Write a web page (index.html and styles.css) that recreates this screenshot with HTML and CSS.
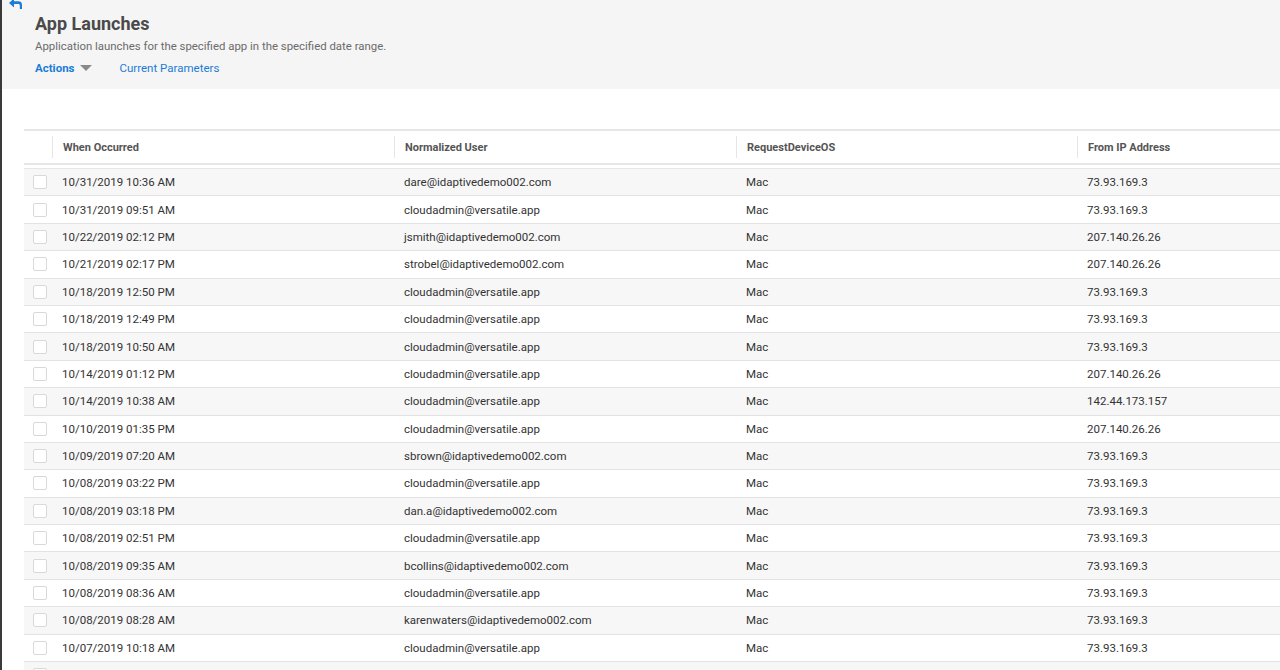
FILE: index.html
```html
<!DOCTYPE html>
<html lang="en">
<head>
<meta charset="utf-8">
<title>App Launches</title>
<link rel="stylesheet" href="styles.css">
</head>
<body>
<div class="page">
  <header class="report-head">
    <svg class="back-icon" width="14" height="10" viewBox="0 0 14 10" aria-hidden="true">
      <path d="M0 4 L5 -0.5 V2.2 H9.5 Q13 2.2 13 6 V10 H10.8 V6.4 Q10.8 5 9.4 5 H5 V8.5 Z" fill="#1b7bd6"/>
    </svg>
    <h1 class="title">App Launches</h1>
    <p class="subtitle">Application launches for the specified app in the specified date range.</p>
    <nav class="head-links">
      <span class="actions">Actions <span class="caret"></span></span>
      <span class="params">Current Parameters</span>
    </nav>
  </header>

  <section class="grid">
    <div class="grid-head">
      <div class="hcell hcheck"></div>
      <div class="hcell">When Occurred</div>
      <div class="hcell">Normalized User</div>
      <div class="hcell">RequestDeviceOS</div>
      <div class="hcell">From IP Address</div>
    </div>
    <div class="grid-body">
      <div class="row"><div class="cell ccheck"><span class="box"></span></div><div class="cell">10/31/2019 10:36 AM</div><div class="cell">dare@idaptivedemo002.com</div><div class="cell">Mac</div><div class="cell">73.93.169.3</div></div>
      <div class="row"><div class="cell ccheck"><span class="box"></span></div><div class="cell">10/31/2019 09:51 AM</div><div class="cell">cloudadmin@versatile.app</div><div class="cell">Mac</div><div class="cell">73.93.169.3</div></div>
      <div class="row"><div class="cell ccheck"><span class="box"></span></div><div class="cell">10/22/2019 02:12 PM</div><div class="cell">jsmith@idaptivedemo002.com</div><div class="cell">Mac</div><div class="cell">207.140.26.26</div></div>
      <div class="row"><div class="cell ccheck"><span class="box"></span></div><div class="cell">10/21/2019 02:17 PM</div><div class="cell">strobel@idaptivedemo002.com</div><div class="cell">Mac</div><div class="cell">207.140.26.26</div></div>
      <div class="row"><div class="cell ccheck"><span class="box"></span></div><div class="cell">10/18/2019 12:50 PM</div><div class="cell">cloudadmin@versatile.app</div><div class="cell">Mac</div><div class="cell">73.93.169.3</div></div>
      <div class="row"><div class="cell ccheck"><span class="box"></span></div><div class="cell">10/18/2019 12:49 PM</div><div class="cell">cloudadmin@versatile.app</div><div class="cell">Mac</div><div class="cell">73.93.169.3</div></div>
      <div class="row"><div class="cell ccheck"><span class="box"></span></div><div class="cell">10/18/2019 10:50 AM</div><div class="cell">cloudadmin@versatile.app</div><div class="cell">Mac</div><div class="cell">73.93.169.3</div></div>
      <div class="row"><div class="cell ccheck"><span class="box"></span></div><div class="cell">10/14/2019 01:12 PM</div><div class="cell">cloudadmin@versatile.app</div><div class="cell">Mac</div><div class="cell">207.140.26.26</div></div>
      <div class="row"><div class="cell ccheck"><span class="box"></span></div><div class="cell">10/14/2019 10:38 AM</div><div class="cell">cloudadmin@versatile.app</div><div class="cell">Mac</div><div class="cell">142.44.173.157</div></div>
      <div class="row"><div class="cell ccheck"><span class="box"></span></div><div class="cell">10/10/2019 01:35 PM</div><div class="cell">cloudadmin@versatile.app</div><div class="cell">Mac</div><div class="cell">207.140.26.26</div></div>
      <div class="row"><div class="cell ccheck"><span class="box"></span></div><div class="cell">10/09/2019 07:20 AM</div><div class="cell">sbrown@idaptivedemo002.com</div><div class="cell">Mac</div><div class="cell">73.93.169.3</div></div>
      <div class="row"><div class="cell ccheck"><span class="box"></span></div><div class="cell">10/08/2019 03:22 PM</div><div class="cell">cloudadmin@versatile.app</div><div class="cell">Mac</div><div class="cell">73.93.169.3</div></div>
      <div class="row"><div class="cell ccheck"><span class="box"></span></div><div class="cell">10/08/2019 03:18 PM</div><div class="cell">dan.a@idaptivedemo002.com</div><div class="cell">Mac</div><div class="cell">73.93.169.3</div></div>
      <div class="row"><div class="cell ccheck"><span class="box"></span></div><div class="cell">10/08/2019 02:51 PM</div><div class="cell">cloudadmin@versatile.app</div><div class="cell">Mac</div><div class="cell">73.93.169.3</div></div>
      <div class="row"><div class="cell ccheck"><span class="box"></span></div><div class="cell">10/08/2019 09:35 AM</div><div class="cell">bcollins@idaptivedemo002.com</div><div class="cell">Mac</div><div class="cell">73.93.169.3</div></div>
      <div class="row"><div class="cell ccheck"><span class="box"></span></div><div class="cell">10/08/2019 08:36 AM</div><div class="cell">cloudadmin@versatile.app</div><div class="cell">Mac</div><div class="cell">73.93.169.3</div></div>
      <div class="row"><div class="cell ccheck"><span class="box"></span></div><div class="cell">10/08/2019 08:28 AM</div><div class="cell">karenwaters@idaptivedemo002.com</div><div class="cell">Mac</div><div class="cell">73.93.169.3</div></div>
      <div class="row"><div class="cell ccheck"><span class="box"></span></div><div class="cell">10/07/2019 10:18 AM</div><div class="cell">cloudadmin@versatile.app</div><div class="cell">Mac</div><div class="cell">73.93.169.3</div></div>
      <div class="row"><div class="cell ccheck"><span class="box"></span></div><div class="cell"></div><div class="cell"></div><div class="cell"></div><div class="cell"></div></div>
    </div>
  </section>
</div>
</body>
</html>
```

FILE: styles.css
```css
* { box-sizing: border-box; }

html, body {
  margin: 0;
  padding: 0;
  height: 100%;
  overflow: hidden;
  background: #ffffff;
}

body {
  font-family: Roboto, "Liberation Sans", Arial, sans-serif;
  color: #333333;
  font-feature-settings: "zero" 1;
}

.page {
  border-left: 2px solid #3a3a3a;
  min-height: 100vh;
  width: 1280px;
  overflow: hidden;
}

.report-head {
  position: relative;
  background: #f5f5f5;
  height: 89px;
  padding: 13px 0 0 33px;
}

.back-icon {
  position: absolute;
  left: 7px;
  top: -1px;
}

.title {
  margin: 0;
  font-size: 18px;
  font-weight: 700;
  line-height: 22px;
  color: #4a4a4a;
}

.subtitle {
  margin: 4px 0 0;
  font-size: 11.4px;
  line-height: 14px;
  color: #6b6b6b;
}

.head-links {
  display: flex;
  align-items: center;
  gap: 28px;
  margin-top: 8px;
  font-size: 11.5px;
  line-height: 14px;
  color: #1b7bd6;
}

.actions {
  font-weight: 700;
  display: inline-flex;
  align-items: center;
  gap: 5px;
}

.caret {
  width: 0;
  height: 0;
  border-left: 6px solid transparent;
  border-right: 6px solid transparent;
  border-top: 6px solid #8a8a8a;
}

.grid {
  margin: 40px 0 0 22px;
  width: 1400px;
}

.grid-head,
.row {
  display: grid;
  grid-template-columns: 28px 342px 342px 341px 347px;
}

.grid-head {
  height: 36px;
  border-top: 2px solid #e6e6e6;
  border-bottom: 2px solid #e6e6e6;
  align-items: center;
}

.hcell {
  height: 22px;
  display: flex;
  align-items: center;
  padding-left: 10px;
  font-size: 11px;
  font-weight: 700;
  color: #555555;
  border-left: 1px solid #e6e6e6;
}

.hcell.hcheck {
  border-left: none;
}

.grid-body {
  margin-top: 3px;
  border-top: 1px solid #e6e6e6;
}

.row {
  height: 27.4px;
  border-bottom: 1px solid #e3e3e3;
  align-items: center;
}

.row:nth-child(odd) {
  background: #f7f7f7;
}

.cell {
  padding-left: 10px;
  font-size: 11.5px;
  color: #333333;
  white-space: nowrap;
}

.cell.ccheck {
  padding-left: 9px;
  display: flex;
  align-items: center;
}

.box {
  display: block;
  width: 14px;
  height: 14px;
  border: 1px solid #d9d9d9;
  border-radius: 2px;
  background: #ffffff;
}
```
